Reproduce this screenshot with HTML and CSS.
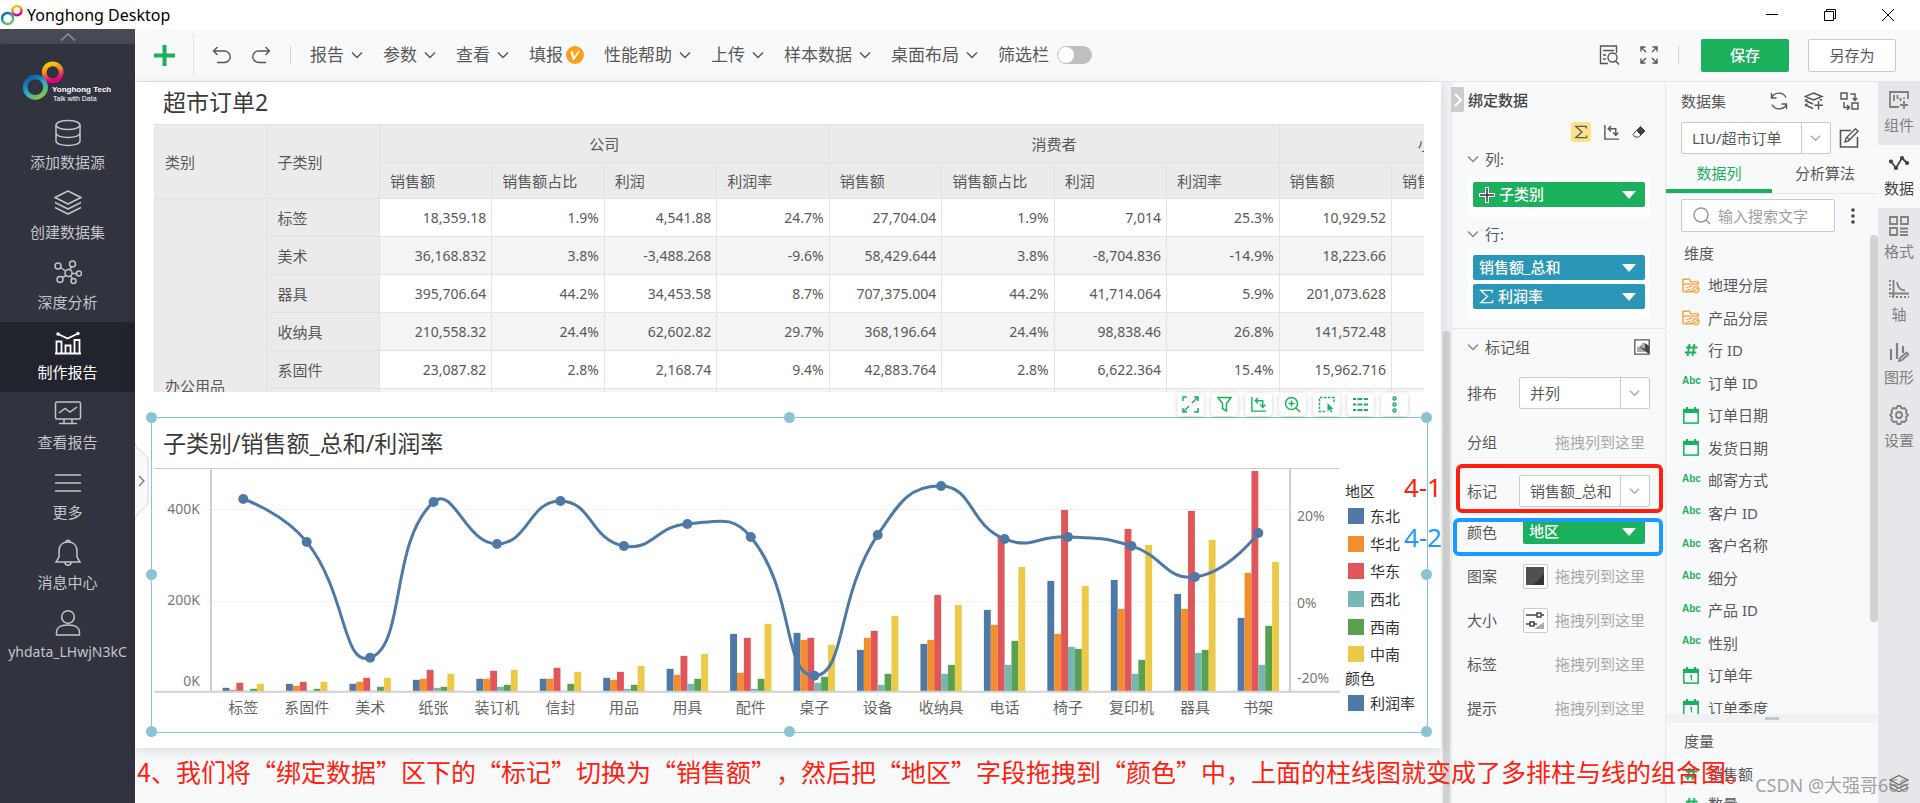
FILE: index.html
```html
<!DOCTYPE html>
<html lang="zh-CN">
<head>
<meta charset="utf-8">
<title>Yonghong Desktop</title>
<link rel="stylesheet" href="styles.css">
</head>
<body>
<svg class="defs" aria-hidden="true">
  <defs>
    <linearGradient id="warm" x1="0" y1="0" x2="0.3" y2="1"><stop offset="0" stop-color="#fcd20c"/><stop offset="0.5" stop-color="#f58a1f"/><stop offset="1" stop-color="#e4007f"/></linearGradient>
    <linearGradient id="cool" x1="0.2" y1="0" x2="0.8" y2="1"><stop offset="0" stop-color="#0b5fa8"/><stop offset="0.5" stop-color="#27a9c9"/><stop offset="1" stop-color="#8cc63f"/></linearGradient>
    <symbol id="rings" viewBox="0 0 40 38"><circle cx="29" cy="11" r="8.3" fill="none" stroke="url(#warm)" stroke-width="4.6"/><circle cx="12" cy="25.500" r="10" fill="none" stroke="url(#cool)" stroke-width="4.600"/></symbol>
    <symbol id="chev" viewBox="0 0 12 12"><path d="M1 3.500 6 8.500 11 3.500" fill="none" stroke="currentColor" stroke-width="1.500"/></symbol>
    <symbol id="caret" viewBox="0 0 14 8"><path d="M0 0H14L7 8Z" fill="currentColor"/></symbol>
    <symbol id="sigma" viewBox="0 0 16 16"><path d="M14 4V1.500H2L9 8 2 14.500H14.500V12" fill="none" stroke="currentColor" stroke-width="1.500"/></symbol>
    <symbol id="swap" viewBox="0 0 18 18"><path d="M2 1V16H17M6 5H13.500V11M8.500 2 5.500 5 8.500 8M10.800 9 13.500 12 16.200 9" fill="none" stroke="currentColor" stroke-width="1.500"/></symbol>
    <symbol id="layers" viewBox="0 0 28 28"><path d="M14 2 27 8.500 14 15 1 8.500ZM1 13.500 14 20 27 13.500M1 18.500 14 25 27 18.500" fill="none" stroke="currentColor" stroke-width="1.600" stroke-linejoin="round"/></symbol>
    <symbol id="folder" viewBox="0 0 20 18"><path d="M1 16V2H8L10 5H18V9M1 16H12M1 7.500H18" fill="none" stroke="currentColor" stroke-width="1.600"/><path d="M4 10.500Q6 12 8 10.500T11.500 10.500M4 13.500Q6 15 8 13.500H10" fill="none" stroke="currentColor" stroke-width="1.200"/><circle cx="15.500" cy="13.500" r="3.300" fill="none" stroke="currentColor" stroke-width="1.400"/><path d="M13.500 15.500 17.500 11.500" stroke="currentColor" stroke-width="1.200"/></symbol>
    <symbol id="hash" viewBox="0 0 14 14"><path d="M5.500 1 3.500 13M10.500 1 8.500 13M2 4.500H13.500M.8 9.500H12.300" fill="none" stroke="currentColor" stroke-width="1.900"/></symbol>
    <symbol id="cal" viewBox="0 0 16 17"><rect x=".8" y="2.500" width="14.400" height="13.600" fill="none" stroke="currentColor" stroke-width="1.500"/><path d="M1 2.500H15V6H1ZM3 0H5V3H3ZM11 0H13V3H11Z" fill="currentColor"/></symbol>
    <symbol id="calone" viewBox="0 0 16 17"><use href="#cal"/><path d="M7 9.500 8.500 8.500V13.500" fill="none" stroke="currentColor" stroke-width="1.200"/></symbol>
  </defs>
</svg>

<header class="titlebar">
  <svg class="app-logo"><use href="#rings"/></svg>
  <span class="app-name">Yonghong Desktop</span>
  <button class="win" aria-label="最小化"><svg width="12" height="12"><path d="M0 5.500H12" stroke="#000"/></svg></button>
  <button class="win" aria-label="还原"><svg width="12" height="12" fill="none" stroke="#000"><path d="M.5 2.500H9.500V11.500H.5ZM2.500 2.500V.5H11.500V9.500H9.500"/></svg></button>
  <button class="win" aria-label="关闭"><svg width="12" height="12" stroke="#000"><path d="M0 0 12 12M12 0 0 12"/></svg></button>
</header>

<div class="shell">
  <nav class="side">
    <button class="side-fold" aria-label="收起"><svg width="16" height="8" fill="none" stroke="#8f9198" stroke-width="1.500"><path d="M1 7.500 8 1 15 7.500"/></svg></button>
    <div class="brand">
      <svg class="brand-rings"><use href="#rings"/></svg>
      <div class="brand-text"><b>Yonghong Tech</b><span>Talk with Data</span></div>
    </div>
    <a class="side-item" href="#"><svg viewBox="0 0 28 28"><ellipse cx="14" cy="6" rx="12" ry="4.500"/><path d="M2 6V22C2 28 26 28 26 22V6M2 14C2 20 26 20 26 14"/></svg>添加数据源</a>
    <a class="side-item" href="#"><svg><use href="#layers"/></svg>创建数据集</a>
    <a class="side-item" href="#"><svg viewBox="0 0 28 28"><circle cx="14.500" cy="14" r="3.500"/><circle cx="4" cy="7" r="3"/><circle cx="18.500" cy="5" r="3"/><circle cx="25" cy="14.500" r="2.500"/><circle cx="6" cy="20.500" r="3"/><circle cx="19.500" cy="22" r="2.500"/><path d="M6.500 8.500 11.500 12M17.500 8 15.800 10.700M22.500 14.500H18M8.500 18.500 12 16.500M18.500 19.500 16.200 17"/></svg>深度分析</a>
    <a class="side-item on" href="#"><svg viewBox="0 0 28 28"><path d="M1 24.500H27M2.500 24V12.500H7.500V24M11.500 24V16.500H16.500V24M20.500 24V11H25.500V24M4 5 13.500 9.500 24 4.500" stroke-width="1.800"/><circle cx="4" cy="5" r="1"/><circle cx="24" cy="4.500" r="1"/></svg>制作报告</a>
    <a class="side-item" href="#"><svg viewBox="0 0 28 28"><rect x="1.500" y="3" width="25" height="17" rx="1.500"/><path d="M5 14 11 9.500 16 13 23 8M10 20V24M18 20V24M5 24.500H23"/></svg>查看报告</a>
    <a class="side-item" href="#"><svg viewBox="0 0 28 28"><path d="M1 6H27M1 14H27M1 22H27"/></svg>更多</a>
    <a class="side-item" href="#"><svg viewBox="0 0 28 28"><path d="M2 23H26L23 18V12C23 6 19 3 14 3S5 6 5 12V18ZM12 3C12 .5 16 .5 16 3M11 23.500C11 27 17 27 17 23.500"/></svg>消息中心</a>
    <a class="side-item user" href="#"><svg viewBox="0 0 28 28"><circle cx="14" cy="8" r="6.300"/><path d="M2.500 26C1.500 18 7 16 14 16S26.500 18 25.500 26Z" stroke-linejoin="round"/></svg>yhdata_LHwjN3kC</a>
  </nav>

  <div class="main">
    <div class="tools">
      <button class="add" aria-label="新建"><svg width="21" height="21"><path d="M10.500 0V21M0 10.500H21" stroke="#1bb05b" stroke-width="4"/></svg></button>
      <button class="ico undo" aria-label="撤销"><svg width="20" height="18"><path d="M5.500 1 1.500 5 5.500 9M2 5H12.500A5.500 5.500 0 0 1 12.500 16.500H5"/></svg></button>
      <button class="ico redo" aria-label="重做"><svg width="20" height="18"><path d="M14.500 1 18.500 5 14.500 9M18 5H7.500A5.500 5.500 0 0 0 7.500 16.500H15"/></svg></button>
      <i class="bar"></i>
      <button class="menu">报告<svg><use href="#chev"/></svg></button>
      <button class="menu">参数<svg><use href="#chev"/></svg></button>
      <button class="menu">查看<svg><use href="#chev"/></svg></button>
      <button class="menu vip">填报<svg viewBox="0 0 18 18"><circle cx="9" cy="9" r="9" fill="#f9a11b"/><path d="M4.500 5.500H7L8 11 12 5H14L8.500 13.500H6.500Z" fill="#fff"/></svg></button>
      <button class="menu">性能帮助<svg><use href="#chev"/></svg></button>
      <button class="menu">上传<svg><use href="#chev"/></svg></button>
      <button class="menu">样本数据<svg><use href="#chev"/></svg></button>
      <button class="menu">桌面布局<svg><use href="#chev"/></svg></button>
      <label class="filter">筛选栏<input type="checkbox" class="switch"></label>
      <span class="grow"></span>
      <button class="ico find" aria-label="查找"><svg width="21" height="20"><path d="M17.500 8V1H1.500V18.500H9M4 5.500H15M4 10H7M4 14H7"/><circle cx="13.500" cy="12.500" r="4.500"/><path d="M16.500 16 20 19.500"/></svg></button>
      <button class="ico" aria-label="全屏"><svg width="18" height="18"><path d="M1 5.500V1H5.500M1 1 6 6M12.500 1H17V5.500M17 1 12 6M1 12.500V17H5.500M1 17 6 12M17 12.500V17H12.500M17 17 12 12"/></svg></button>
      <i class="bar end"></i>
      <button class="save">保存</button>
      <button class="saveas">另存为</button>
    </div>

    <div class="body">
      <main class="work">
        <section class="sheet">
          <h2 class="widget-title">超市订单2</h2>
          <div class="table-clip">
            <table class="grid">
              <thead>
                <tr><th rowspan="2">类别</th><th rowspan="2">子类别</th><th colspan="4" class="group">公司</th><th colspan="4" class="group">消费者</th><th colspan="3" class="group">小型企业</th></tr>
                <tr><th>销售额</th><th>销售额占比</th><th>利润</th><th>利润率</th><th>销售额</th><th>销售额占比</th><th>利润</th><th>利润率</th><th>销售额</th><th>销售额占比</th><th>利润</th></tr>
              </thead>
              <tbody>
                <tr><th rowspan="6">办公用品</th><th>标签</th><td>18,359.18</td><td>1.9%</td><td>4,541.88</td><td>24.7%</td><td>27,704.04</td><td>1.9%</td><td>7,014</td><td>25.3%</td><td>10,929.52</td><td></td><td></td></tr>
                <tr><th>美术</th><td>36,168.832</td><td>3.8%</td><td>-3,488.268</td><td>-9.6%</td><td>58,429.644</td><td>3.8%</td><td>-8,704.836</td><td>-14.9%</td><td>18,223.66</td><td></td><td></td></tr>
                <tr><th>器具</th><td>395,706.64</td><td>44.2%</td><td>34,453.58</td><td>8.7%</td><td>707,375.004</td><td>44.2%</td><td>41,714.064</td><td>5.9%</td><td>201,073.628</td><td></td><td></td></tr>
                <tr><th>收纳具</th><td>210,558.32</td><td>24.4%</td><td>62,602.82</td><td>29.7%</td><td>368,196.64</td><td>24.4%</td><td>98,838.46</td><td>26.8%</td><td>141,572.48</td><td></td><td></td></tr>
                <tr><th>系固件</th><td>23,087.82</td><td>2.8%</td><td>2,168.74</td><td>9.4%</td><td>42,883.764</td><td>2.8%</td><td>6,622.364</td><td>15.4%</td><td>15,962.716</td><td></td><td></td></tr>
                <tr class="rest"><th></th><td></td><td></td><td></td><td></td><td></td><td></td><td></td><td></td><td></td><td></td><td></td></tr>
              </tbody>
            </table>
          </div>
          <div class="chart">
            <h2 class="widget-title">子类别/销售额_总和/利润率</h2>
            <div class="chart-body">
              <svg class="plot" id="plot" viewBox="154 468 1188 264"></svg>
              <div class="legend">
                <h3>地区</h3>
                <ul>
                  <li><i class="c1"></i>东北</li><li><i class="c2"></i>华北</li><li><i class="c3"></i>华东</li>
                  <li><i class="c4"></i>西北</li><li><i class="c5"></i>西南</li><li><i class="c6"></i>中南</li>
                </ul>
                <h3>颜色</h3>
                <ul><li><i class="c1"></i>利润率</li></ul>
              </div>
            </div>
            <div class="float">
              <button aria-label="放大"><svg width="17" height="17"><path d="M1 5V1H5M12 1H16V5M16 12V16H12M5 16H1V12M10 7 15 2M7 10 2 15"/></svg></button>
              <button aria-label="筛选"><svg width="17" height="17"><path d="M2 1.500H15L10.500 7.500V15L6.500 12.500V7.500Z"/></svg></button>
              <button aria-label="转置"><svg width="17" height="17"><use href="#swap"/></svg></button>
              <button aria-label="缩放"><svg width="17" height="17"><circle cx="7.500" cy="7.500" r="6"/><path d="M12 12 16 16M4.500 7.500H10.500M7.500 4.500V10.500"/></svg></button>
              <button aria-label="选择"><svg width="17" height="17"><path d="M16 6V1.500H1.500V15.500H7" stroke-dasharray="2.500 1.500"/><path d="M9.500 7V15.500L11.500 13.500 13 16.500 14.300 15.800 12.800 13H15.500Z" fill="#1bb05b" stroke="none"/></svg></button>
              <button aria-label="明细"><svg width="17" height="17"><path d="M1 3H4M5.500 3H10.500M12 3H16M1 8.500H4M5.500 8.500H10.500M12 8.500H16M1 14H4M5.500 14H10.500M12 14H16" stroke-width="2"/></svg></button>
              <button aria-label="更多"><svg width="17" height="17" fill="#1bb05b"><circle cx="8.500" cy="2.500" r="1.500"/><circle cx="8.500" cy="8.500" r="1.500"/><circle cx="8.500" cy="14.500" r="1.500"/></svg></button>
            </div>
            <i class="dot tl"></i><i class="dot tc"></i><i class="dot tr"></i><i class="dot ml"></i><i class="dot mr"></i><i class="dot bl"></i><i class="dot bc"></i><i class="dot br"></i>
            <span class="note n1">4-1</span>
            <span class="note n2">4-2</span>
          </div>
          <button class="drawer" aria-label="展开"><svg width="14" height="82"><path d="M-1 0 Q1 9 7 12 Q13 16 13 20V62Q13 66 7 70Q1 74-1 82Z" fill="#f8f9fb" stroke="#d5d8dd"/><path d="M4 36 9 41 4 46" fill="none" stroke="#777" stroke-width="1.300"/></svg></button>
        </section>
      </main>
      <div class="scroll"><i></i></div>

      <section class="bind">
        <button class="fold" aria-label="收起面板"><svg width="8" height="14"><path d="M1 1 7 7 1 13" fill="none" stroke="#fff" stroke-width="2"/></svg></button>
        <h3 class="panel-title strong">绑定数据</h3>
        <div class="bind-tools">
          <button class="hot" aria-label="聚合"><svg width="14" height="16"><use href="#sigma"/></svg></button>
          <button aria-label="转置"><svg width="17" height="17"><use href="#swap"/></svg></button>
          <button aria-label="清除"><svg width="14" height="14"><path d="M8.500 1.500 13 6 9 10 4.500 5.500Z" fill="#444" stroke="#444"/><path d="M4.500 5.500 9 10 6.500 12H3L1 9.500Z" fill="#fff" stroke="#444"/></svg></button>
        </div>
        <h4 class="sub"><svg><use href="#chev"/></svg>列:</h4>
        <div class="well"><button class="pill green"><svg width="16" height="16" viewBox="0 0 16 16"><path d="M8 0V16M0 8H16" stroke="#fff" stroke-width="4"/><path d="M8 1V15M1 8H15" stroke="#333" stroke-width="1.500"/></svg><span>子类别</span><svg class="caret"><use href="#caret"/></svg></button></div>
        <h4 class="sub rows"><svg><use href="#chev"/></svg>行:</h4>
        <div class="well">
          <button class="pill blue"><span>销售额_总和</span><svg class="caret"><use href="#caret"/></svg></button>
          <button class="pill blue"><svg width="15" height="15"><use href="#sigma"/></svg><span>利润率</span><svg class="caret"><use href="#caret"/></svg></button>
        </div>
        <h4 class="sub marks"><svg><use href="#chev"/></svg>标记组<button aria-label="图表类型"><svg width="16" height="16"><path d="M.8.800H15.200V15.200H.8Z" fill="#fff" stroke="#555" stroke-width="1.300"/><path d="M3 8H6V6H8V4H11V13H3Z" fill="#aaa"/><path d="M4 7 15 15V7L11 4V10Z" fill="#444"/></svg></button></h4>
        <div class="row r1"><label for="arrange">排布</label><span class="pick"><select id="arrange"><option>并列</option></select><svg><use href="#chev"/></svg></span></div>
        <div class="row"><span>分组</span><em>拖拽列到这里</em></div>
        <div class="row r3"><label for="mark">标记</label><span class="pick"><select id="mark"><option>销售额_总和</option></select><svg><use href="#chev"/></svg></span><i class="callout red"></i></div>
        <div class="row r4"><span>颜色</span><button class="pill green"><span>地区</span><svg class="caret"><use href="#caret"/></svg></button><i class="callout azure"></i></div>
        <div class="row"><span>图案</span><button class="tile" aria-label="图案"><svg width="18" height="18"><path d="M0 0H18V18H0Z" fill="#505050"/><path d="M18 7V18H7Z" fill="#333"/></svg></button><em>拖拽列到这里</em></div>
        <div class="row"><span>大小</span><button class="tile" aria-label="大小"><svg width="18" height="18" fill="#fff" stroke="#444" stroke-width="1.500"><path d="M0 4H18M0 13H11"/><path d="M18 11V18H8Z" fill="#aaa" stroke="none"/><rect x="11" y="2" width="4" height="4"/><rect x="4" y="11" width="4" height="4"/></svg></button><em>拖拽列到这里</em></div>
        <div class="row"><span>标签</span><em>拖拽列到这里</em></div>
        <div class="row"><span>提示</span><em>拖拽列到这里</em></div>
      </section>

      <section class="data">
        <div class="data-head">
          <h3 class="panel-title">数据集</h3>
          <button aria-label="刷新"><svg width="18" height="18"><path d="M1.500 6A8 8 0 0 1 16 5.500M16.500 12A8 8 0 0 1 2 12.500M1.500 1V6H6.500M16.500 17V12H11.500"/></svg></button>
          <button aria-label="添加"><svg width="20" height="18"><path d="M9.500 1 18 4.500 9.500 8 1 4.500ZM1 8.500 3.500 7.500M1 8.500 9 12M1 13 3.500 12M1 13 9 16.500M18 8 15.500 7.500M14.500 9V17.500M10.500 13.300H19"/></svg></button>
          <button aria-label="切换"><svg width="19" height="18"><path d="M1 1H7V7H1ZM12 11H18V17H12ZM10.500 2H15V8M12.800 6 15 8.500 17.200 6M4 10V15.500H9M7 13 9.500 15.500 7 18"/></svg></button>
        </div>
        <div class="data-pick">
          <span class="pick"><select aria-label="数据集"><option>LIU/超市订单</option></select><svg><use href="#chev"/></svg></span>
          <button aria-label="编辑"><svg width="20" height="20"><path d="M12 2.500H1.500V19H18.500V9" stroke-width="1.600"/><path d="M6 14 7 10 16.500.8 19 3.300 9.500 12.800ZM8 9.500 11 12"/></svg></button>
        </div>
        <div class="tabs"><button class="on">数据列</button><button>分析算法</button></div>
        <div class="search">
          <label class="box"><svg width="18" height="18"><circle cx="8" cy="8" r="7"/><path d="M13 13 17 17"/></svg><input type="text" placeholder="输入搜索文字" aria-label="搜索"></label>
          <button aria-label="更多"><svg width="4" height="16" fill="#444"><circle cx="2" cy="2" r="1.800"/><circle cx="2" cy="8" r="1.800"/><circle cx="2" cy="14" r="1.800"/></svg></button>
        </div>
        <div class="fields">
          <h4>维度</h4>
          <ul>
            <li><svg class="o"><use href="#folder"/></svg>地理分层</li>
            <li><svg class="o"><use href="#folder"/></svg>产品分层</li>
            <li><svg class="h"><use href="#hash"/></svg>行 ID</li>
            <li><b>Abc</b>订单 ID</li>
            <li><svg><use href="#cal"/></svg>订单日期</li>
            <li><svg><use href="#cal"/></svg>发货日期</li>
            <li><b>Abc</b>邮寄方式</li>
            <li><b>Abc</b>客户 ID</li>
            <li><b>Abc</b>客户名称</li>
            <li><b>Abc</b>细分</li>
            <li><b>Abc</b>产品 ID</li>
            <li><b>Abc</b>性别</li>
            <li><svg><use href="#calone"/></svg>订单年</li>
            <li><svg><use href="#calone"/></svg>订单季度</li>
          </ul>
          <i class="thumb"></i>
        </div>
        <div class="split"><i></i></div>
        <div class="measures">
          <h4>度量</h4>
          <ul><li><svg class="h"><use href="#hash"/></svg>销售额</li><li><svg class="h"><use href="#hash"/></svg>数量</li></ul>
        </div>
      </section>

      <nav class="rail">
        <button><svg viewBox="0 0 20 20"><path d="M10 17H1V2H19V9M5 5V11M8.500 5V9M11.500 8V11M15 7.500V9M15 11V19M11 15H19"/></svg>组件</button>
        <button class="on"><svg viewBox="0 0 20 20"><path d="M2 8.500 7 15 13 5 18 10"/><g fill="#444"><circle cx="2" cy="8.500" r="1.200"/><circle cx="7" cy="15" r="1.200"/><circle cx="13" cy="5" r="1.200"/><circle cx="18" cy="10" r="1.200"/></g></svg>数据</button>
        <button><svg viewBox="0 0 20 20"><path d="M1 1H8V8H1ZM12 1H19V8H12ZM1 12H8V19H1ZM11 12.500H19M11 15.800H19M11 19H19"/></svg>格式</button>
        <button><svg viewBox="0 0 20 20"><path d="M4.500 1V18M0 14.500H20"/><path d="M1 1V18M3 18H20" stroke-dasharray="2 2"/><path d="M8 3Q9 11 16 11.500"/></svg>轴</button>
        <button><svg viewBox="0 0 20 20"><path d="M2 7V18M8 1V17M14 4V11" stroke-width="2.200"/><path d="M10 19 11 16 17.500 10.500 19.500 12.500 13 18Z"/></svg>图形</button>
        <button><svg viewBox="0 0 20 20"><path d="M7.500 3.500 8.500 1H11.500L12.500 3.500 15.500 3 17.500 5.500 17 8 19 10 17 12 17.500 15 15.500 17 12.500 16.500 11.500 19H8.500L7.500 16.500 4.500 17 2.500 15 3 12 1 10 3 8 2.500 5.500 4.500 3Z"/><circle cx="10" cy="10" r="3"/></svg>设置</button>
        <span class="grow"></span>
        <svg class="rail-end"><use href="#layers"/></svg>
      </nav>
    </div>
  </div>
</div>
<p class="caption">4、我们将“绑定数据”区下的“标记”切换为“销售额”，然后把“地区”字段拖拽到“颜色”中，上面的柱线图就变成了多排柱与线的组合图。</p>
<p class="mark">CSDN @大强哥666</p>
<script src="chart.js"></script>
</body>
</html>
```
FILE: styles.css
```css
* { box-sizing: border-box; }
body { margin: 0; height: 100vh; overflow: hidden; position: relative; display: flex; flex-direction: column; background: #fff; color: #595959; font: 15px/20px "Noto Sans", "Noto Sans CJK SC", sans-serif; }
button { border: 0; padding: 0; background: none; color: inherit; font: inherit; display: flex; align-items: center; justify-content: center; }
h2, h3, h4, ul, p { margin: 0; padding: 0; font-weight: 400; font-size: 15px; list-style: none; }
svg { display: block; flex: none; }
.defs { position: absolute; width: 0; height: 0; }
.grow { flex: 1; }

.titlebar { height: 29px; flex: none; display: flex; align-items: center; color: #000; padding-right: 3px; }
.app-logo { width: 22px; height: 22px; margin: 0 4px 0 1px; }
.app-name { font-size: 16px; line-height: 28px; flex: 1; }
.win { width: 58px; height: 29px; }

.shell { flex: 1; min-height: 0; display: flex; }
.side { flex: 0 0 135px; background: #31333f; color: #c3c4c8; display: flex; flex-direction: column; }
.side-fold { height: 15px; background: #474a54; border-radius: 0 0 3px 3px; }
.brand { height: 68px; padding: 17px 0 0 23px; display: flex; align-items: flex-start; color: #fff; }
.brand-rings { width: 41px; height: 39px; }
.brand-text { margin: 24px 0 0 -12px; font-family: "Liberation Sans", sans-serif; display: flex; flex-direction: column; white-space: nowrap; }
.brand-text b { font-size: 8px; line-height: 9px; }
.brand-text span { font-size: 7px; line-height: 9px; padding-left: 1px; }
.side-item { height: 70px; padding-top: 7px; display: flex; flex-direction: column; align-items: center; gap: 5px; color: inherit; text-decoration: none; }
.side-item svg { width: 28px; height: 28px; fill: none; stroke: currentColor; stroke-width: 1.5px; }
.side-item.on { background: #21232d; color: #fff; }
.side-item.user { font-size: 14px; }

.main { flex: 1; min-width: 0; display: flex; flex-direction: column; background: #f8f9fb; }
.tools { height: 53px; flex: none; border-bottom: 1px solid #e4e6eb; display: flex; align-items: center; font-size: 17px; line-height: 24px; }
.add { width: 59px; height: 43px; border-right: 1px solid #e2e4e8; }
.ico svg { fill: none; stroke: #555; stroke-width: 1.4px; }
.undo { margin-left: 18px; }
.redo { margin-left: 19px; }
.bar { width: 1px; height: 18px; background: #d2d4d8; margin: 0 19px; }
.bar.end { margin: 0 22px 0 20px; }
.menu { gap: 7px; margin-right: 20px; }
.menu svg { width: 12px; height: 12px; }
.menu.vip { gap: 3px; }
.menu.vip svg { width: 18px; height: 18px; }
.filter { display: flex; align-items: center; gap: 8px; }
.switch { appearance: none; margin: 0; width: 35px; height: 18px; border-radius: 9px; background: #bfbfbf; display: flex; padding: 1px; }
.switch::before { content: ""; width: 16px; height: 16px; border-radius: 50%; background: #fff; }
.find { margin-right: 20px; }
.save, .saveas { width: 88px; height: 33px; font-size: 15px; border-radius: 2px; }
.save { background: #1bb05b; color: #fff; font-weight: 500; }
.saveas { background: #fff; border: 1px solid #c9cbcf; margin: 0 24px 0 19px; }

.body { flex: 1; min-height: 0; display: flex; }
.work { flex: 1; min-width: 0; }
.sheet { position: relative; background: #fff; padding: 0 0 15px; box-shadow: 0 3px 12px #0000001f; }
.widget-title { font-size: 23px; line-height: 32px; color: #3a3a3a; }
.sheet > .widget-title { padding: 4px 0 6px 28px; }
.table-clip { height: 268px; margin: 0 17px 0 19px; overflow: hidden; }
.grid { width: 1463px; table-layout: fixed; border-collapse: collapse; }
.grid th, .grid td { height: 38px; padding: 0 5px; border: 1px solid #e3e3e3; text-align: right; font-size: 14px; }
.grid th { background: #ebebeb; text-align: left; font-weight: 400; font-size: 15px; padding-left: 10px; }
.grid thead tr + tr th { height: 36px; }
.grid .group { text-align: center; padding: 0; }
.grid tbody tr:nth-child(even) td { background: #f4f4f4; }
.grid .rest th, .grid .rest td { height: 184px; }

.chart { position: relative; margin: 25px 13px 0 16px; border: 1px solid #8ac3d2; }
.chart > .widget-title { padding: 9px 0 9px 11px; }
.chart-body { display: flex; padding-left: 2px; }
.plot { flex: 1; min-width: 0; }
.plot text { font-size: 15px; fill: #666; text-anchor: middle; }
.plot .num { font-size: 14px; fill: #777; text-anchor: start; }
.plot .num.left { text-anchor: end; }
.legend { flex: 0 0 86px; padding-top: 13px; color: #333; }
.legend h3 { padding-left: 4px; height: 21px; }
.legend ul { display: grid; grid-auto-rows: 28px 27px 28px; padding-left: 7px; }
.legend li { display: flex; align-items: center; gap: 6px; }
.legend i { width: 16px; height: 16px; }
.c1 { background: #4e79a7; }
.c2 { background: #f28e2b; }
.c3 { background: #e15759; }
.c4 { background: #76b7b2; }
.c5 { background: #59a14f; }
.c6 { background: #edc948; }
.float { position: absolute; right: 19px; top: -25px; display: flex; gap: 7px; }
.float button { width: 27px; height: 23px; background: #fff; border-radius: 4px; box-shadow: 0 1px 4px #0003; color: #1bb05b; }
.float svg { fill: none; stroke: #1bb05b; stroke-width: 1.5px; }
.dot { position: absolute; width: 11px; height: 11px; margin: -6px; border-radius: 50%; background: #8cc3d2; }
.tl, .tc, .tr { top: 0; }
.ml, .mr { top: 50%; }
.bl, .bc, .br { top: 100%; }
.tl, .ml, .bl { left: 0; }
.tc, .bc { left: 50%; }
.tr, .mr, .br { left: 100%; }
.note { position: absolute; right: -15px; font-size: 26px; line-height: 30px; }
.n1 { top: 54px; color: #ff1e0f; }
.n2 { top: 104px; color: #1b9bff; }
.drawer { position: absolute; left: 0; top: 358px; }
.scroll { flex: 0 0 10px; background: #eff1f4; padding: 249px 1px 0 2px; display: flex; }
.scroll i { flex: 1; background: #d2d2d2; border-radius: 4px 4px 0 0; }

.bind { flex: 0 0 214px; position: relative; border-left: 1px solid #e4e6eb; }
.panel-title { line-height: 20px; }
.bind .panel-title { padding: 8px 0 0 16px; }
.strong { font-weight: 500; color: #444; }
.fold { position: absolute; left: -1px; top: 5px; width: 13px; height: 25px; background: #ccc; border-radius: 0 2px 2px 0; }
.bind-tools { display: flex; justify-content: flex-end; align-items: center; gap: 12px; padding: 12px 19px 0 0; }
.hot { width: 20px; height: 20px; background: #fde28a; border-radius: 2px; }
.sub { display: flex; align-items: center; gap: 6px; padding: 7px 15px 8px; line-height: 20px; }
.sub > svg { width: 12px; height: 12px; color: #888; }
.sub.rows { padding: 6px 15px; }
.well { margin: 0 15px 0 16px; background: #fff; padding: 5px; min-height: 41px; border-radius: 2px; display: flex; flex-direction: column; gap: 4px; }
.well:has(.blue) { min-height: 70px; }
.pill { height: 25px; border-radius: 2px; color: #fff; font-weight: 500; padding: 0 9px 0 6px; gap: 4px; }
.pill span { flex: 1; text-align: left; line-height: 25px; }
.green { background: #1bb05b; }
.blue { background: #2a96b8; }
.caret { width: 14px; height: 8px; }
.sub.marks { margin-top: 8px; border-top: 1px solid #e4e6eb; padding-top: 8px; }
.marks button { margin-left: auto; }
.row { position: relative; display: flex; align-items: center; padding: 0 20px 0 15px; height: 44px; }
.row > :first-child { flex: 1; }
.row em { font-style: normal; color: #a8a8a8; }
.r1 { height: 55px; padding-right: 15px; }
.r3 { height: 51px; border-top: 1px solid #e8eaee; padding-right: 15px; margin-top: 1px; }
.r4 { height: 31px; margin-bottom: 7px; }
.r4 .pill { width: 122px; }
.pick { display: grid; width: 131px; height: 32px; background: #fff; border: 1px solid #c8cacd; border-radius: 2px; grid-template-columns: 1fr 29px; align-items: center; }
.pick select { grid-area: 1 / 1 / 2 / 3; height: 30px; appearance: none; border: 0; background: none; font: inherit; color: inherit; padding: 0 0 0 10px; }
.pick svg { grid-area: 1 / 2; width: 28px; height: 30px; padding: 9px 8px; border-left: 1px solid #c8cacd; color: #aaa; pointer-events: none; }
.tile { width: 25px; height: 25px; border: 1px solid #c8cacd; background: #fff; border-radius: 2px; margin-right: 7px; }
.callout { position: absolute; border: 4px solid; border-radius: 6px; }
.callout.red { inset: -2px 2px 3px 4px; border-color: #ff1e0f; }
.callout.azure { inset: 2px 2px -9px 1px; border-color: #1b9bff; }

.data { flex: 0 0 213px; border-left: 1px solid #e4e6eb; display: flex; flex-direction: column; min-height: 0; }
.data button svg { fill: none; stroke: #555; stroke-width: 1.4px; }
.data-head { display: flex; align-items: center; gap: 16px; padding: 6px 19px 0 15px; height: 31px; }
.data-head h3 { flex: 1; }
.data-pick { display: flex; align-items: center; gap: 8px; padding: 9px 0 6px 15px; }
.data-pick .pick { width: 150px; }
.tabs { display: flex; border-bottom: 1px solid #e4e6eb; height: 34px; }
.tabs button { flex: 1; padding-bottom: 7px; }
.tabs .on { color: #1bb05b; border-bottom: 4px solid #1bb05b; padding-bottom: 3px; }
.search { display: flex; align-items: center; gap: 16px; padding: 5px 0 0 15px; }
.search .box { width: 154px; height: 33px; border: 1px solid #c8cacd; border-radius: 2px; background: #fff; display: flex; align-items: center; padding-left: 11px; gap: 7px; }
.box svg { fill: none; stroke: #999; stroke-width: 1.5px; }
.box input { width: 110px; border: 0; padding: 0; font: inherit; background: none; }
.box input::placeholder { color: #a0a0a0; opacity: 1; }
.search button svg { fill: #444; stroke: none; }
.fields { position: relative; flex: 0 0 482px; overflow: hidden; }
.fields h4, .measures h4 { padding: 11px 0 6px 18px; line-height: 20px; }
.fields ul { display: grid; grid-auto-rows: 32px 33px; }
.data li { display: flex; align-items: center; gap: 8px; padding-left: 16px; }
.data li svg { width: 18px; height: 17px; color: #1bb05b; }
.data li svg.h { height: 14px; }
.data li svg.o { color: #f6a43a; }
.data li b { width: 18px; font: 700 10px/16px "Liberation Sans", sans-serif; color: #1bb05b; padding-bottom: 3px; }
.thumb { position: absolute; right: 0; top: 3px; width: 8px; height: 387px; background: #d2d2d2; border-radius: 4px; }
.split { height: 9px; flex: none; background: #eff1f3; display: flex; justify-content: center; align-items: center; }
.split i { width: 14px; height: 3px; background: #c4c6c9; }
.measures { flex: 1; overflow: hidden; }
.measures h4 { padding-top: 8px; padding-bottom: 7px; }
.measures ul { display: grid; grid-auto-rows: 32px 28px; }

.rail { flex: 0 0 42px; background: #e6e7ea; display: flex; flex-direction: column; color: #808080; }
.rail button { height: 63px; flex-direction: column; justify-content: flex-start; padding-top: 8px; gap: 5px; }
.rail button svg { width: 20px; height: 20px; fill: none; stroke: currentColor; stroke-width: 1.8px; }
.rail .on { background: #f8f9fb; color: #444; }
.rail-end { width: 20px; height: 20px; margin: 0 auto 9px; color: #666; }

.caption { position: absolute; left: 137px; top: 754px; font: 25px/34px "Noto Sans CJK SC", sans-serif; text-spacing-trim: space-all; color: #ff1e0f; white-space: nowrap; }
.mark { position: absolute; right: 11px; bottom: 6px; font-size: 18px; line-height: 24px; color: #8a8a8acc; white-space: nowrap; }
```
FILE: chart.js
```js
const names = ["标签","系固件","美术","纸张","装订机","信封","用品","用具","配件","桌子","设备","收纳具","电话","椅子","复印机","器具","书架"];
const colors = ["#4e79a7","#f28e2b","#e15759","#76b7b2","#59a14f","#edc948"];
// Bar heights in plot units, one row per category, one value per region.
const bars = [
  [4,2,9,1,3,8],[8,6,10,1,3,10],[8,10,14,1,5,14],[12,13,22,4,5,18],[13,13,21,5,7,22],
  [13,13,24,1,8,20],[14,12,20,3,7,26],[23,17,36,8,13,38],[58,19,54,3,13,68],[59,52,54,9,15,47],
  [42,54,61,7,18,76],[48,52,97,18,27,87],[82,67,155,27,51,125],[111,58,182,45,43,106],
  [112,83,163,18,32,147],[98,83,181,39,42,152],[74,119,221,27,66,130]
];
// Profit-rate line: vertical position of each point.
const rate = [499,542,658,502,544,501,546,524,537,676,535,486,539,537,546,577,533];
const base = 692, first = 243.3, step = 63.5, barW = 6.9;
const x = i => first + i * step;
let out = "";
for (const y of [509.5, 601.5]) out += `<path d="M206 ${y}H1291" stroke="#f3f3f3"/>`;
for (const y of [517.5, 603.5, 689.5]) out += `<path d="M1291 ${y}H1296" stroke="#eee"/>`;
out += `<path d="M154 468.500H1341" stroke="#ccc"/>`;
names.forEach((n, i) => {
  bars[i].forEach((h, k) => {
    out += `<rect x="${x(i) - 3 * barW + k * barW}" y="${base - h}" width="${barW}" height="${h}" fill="${colors[k]}"/>`;
  });
  out += `<path d="M${x(i)} 693V697" stroke="#eee"/><text x="${x(i)}" y="713">${n}</text>`;
});
out += `<path d="M211 468V692M1291 468V692M154 692H1341" stroke="#d0d0d0" stroke-width="2"/>`;
for (const [t, y] of [["400K", 514], ["200K", 605], ["0K", 686]]) out += `<text class="num left" x="200" y="${y}">${t}</text>`;
for (const [t, y] of [["20%", 521], ["0%", 608], ["-20%", 683]]) out += `<text class="num" x="1298" y="${y}">${t}</text>`;

const pts = rate.map((y, i) => [x(i), y]);
const dist = (a, b) => Math.hypot(a[0] - b[0], a[1] - b[1]);
let d = `M${pts[0]}`, out1 = pts[0];
for (let i = 1; i < pts.length; i++) {
  const p = pts[i], prev = pts[i - 1], next = pts[i + 1];
  let inn = p, nextOut = p;
  if (next) {
    const a = dist(prev, p), b = dist(p, next), r = b / (a + b);
    const v = [(next[0] - prev[0]) / 2, (next[1] - prev[1]) / 2];
    inn = [p[0] - v[0] * (1 - r), p[1] - v[1] * (1 - r)];
    nextOut = [p[0] + v[0] * r, p[1] + v[1] * r];
  }
  d += `C${out1} ${inn} ${p}`;
  out1 = nextOut;
}
out += `<path d="${d}" fill="none" stroke="#4e79a7" stroke-width="3"/>`;
for (const p of pts) out += `<circle cx="${p[0]}" cy="${p[1]}" r="5" fill="#4e79a7"/>`;
document.getElementById("plot").innerHTML = out;
```
